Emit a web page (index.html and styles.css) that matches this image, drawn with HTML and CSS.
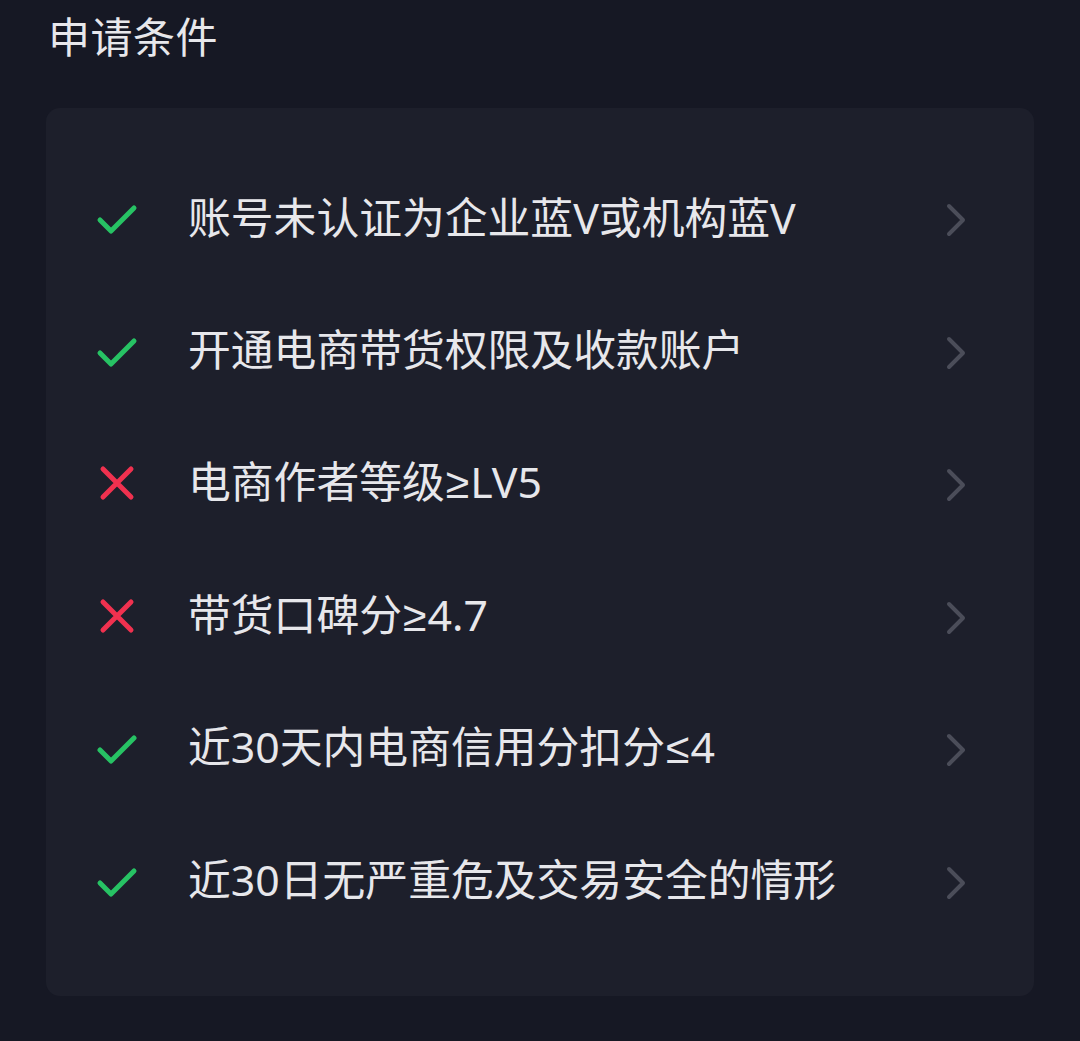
FILE: index.html
```html
<!DOCTYPE html>
<html>
  <head>
    <meta charset="utf-8">
    <title>申请条件</title>
    <link rel="stylesheet" href="styles.css">
  </head>
  <body>
    <div class="title">申请条件</div>
    <div class="card">
      <div class="row">
        <svg class="mark" viewBox="0 0 44 44"><path class="ok" d="M4 22 L15 33 L38 10"/></svg>
        <span class="label">账号未认证为企业蓝V或机构蓝V</span>
        <svg class="arrow" viewBox="0 0 22 34"><path d="M3 3 L17 17 L3 31"/></svg>
      </div>
      <div class="row">
        <svg class="mark" viewBox="0 0 44 44"><path class="ok" d="M4 22 L15 33 L38 10"/></svg>
        <span class="label">开通电商带货权限及收款账户</span>
        <svg class="arrow" viewBox="0 0 22 34"><path d="M3 3 L17 17 L3 31"/></svg>
      </div>
      <div class="row">
        <svg class="mark" viewBox="0 0 44 44"><path class="no" d="M7 6 L35 34 M35 6 L7 34"/></svg>
        <span class="label">电商作者等级<span class="op">≥</span>LV5</span>
        <svg class="arrow" viewBox="0 0 22 34"><path d="M3 3 L17 17 L3 31"/></svg>
      </div>
      <div class="row">
        <svg class="mark" viewBox="0 0 44 44"><path class="no" d="M7 6 L35 34 M35 6 L7 34"/></svg>
        <span class="label">带货口碑分<span class="op">≥</span>4.7</span>
        <svg class="arrow" viewBox="0 0 22 34"><path d="M3 3 L17 17 L3 31"/></svg>
      </div>
      <div class="row">
        <svg class="mark" viewBox="0 0 44 44"><path class="ok" d="M4 22 L15 33 L38 10"/></svg>
        <span class="label">近30天内电商信用分扣分<span class="op">≤</span>4</span>
        <svg class="arrow" viewBox="0 0 22 34"><path d="M3 3 L17 17 L3 31"/></svg>
      </div>
      <div class="row">
        <svg class="mark" viewBox="0 0 44 44"><path class="ok" d="M4 22 L15 33 L38 10"/></svg>
        <span class="label">近30日无严重危及交易安全的情形</span>
        <svg class="arrow" viewBox="0 0 22 34"><path d="M3 3 L17 17 L3 31"/></svg>
      </div>
    </div>
  </body>
</html>
```

FILE: styles.css
```css
*, *:before, *:after {
  box-sizing: border-box;
}
html, body {
  margin: 0;
  padding: 0;
}
body {
  width: 1080px;
  height: 1041px;
  overflow: hidden;
  background: #161824;
  color: #e7e7eb;
  font-family: "Noto Sans", "Noto Sans CJK SC", sans-serif;
  padding: 16px 46px 0 46px;
}
.title {
  font-size: 42px;
  line-height: 42px;
  padding-left: 2px;
  letter-spacing: 0.5px;
}
.card {
  margin-top: 50px;
  width: 988px;
  background: #1d1f2b;
  border-radius: 14px;
  padding: 46px 0 47px 0;
}
.row {
  display: flex;
  align-items: center;
  height: 132.5px;
  padding-left: 50px;
  padding-right: 66px;
}
.mark {
  width: 44px;
  height: 44px;
  flex: none;
}
.mark path {
  fill: none;
  stroke-width: 5;
  stroke-linecap: round;
  stroke-linejoin: round;
}
.mark .ok {
  stroke: #27c264;
}
.mark .no {
  stroke: #f0314f;
}
.label {
  flex: 1;
  margin-left: 48px;
  font-size: 42.8px;
  line-height: 1;
  white-space: nowrap;
  margin-top: -4px;
}
.op {
  font-family: "Liberation Sans", sans-serif;
  margin: 0 1px;
}
.arrow {
  width: 22px;
  height: 34px;
  flex: none;
}
.arrow path {
  fill: none;
  stroke: #4b4d59;
  stroke-width: 4;
  stroke-linecap: round;
  stroke-linejoin: round;
}
```
